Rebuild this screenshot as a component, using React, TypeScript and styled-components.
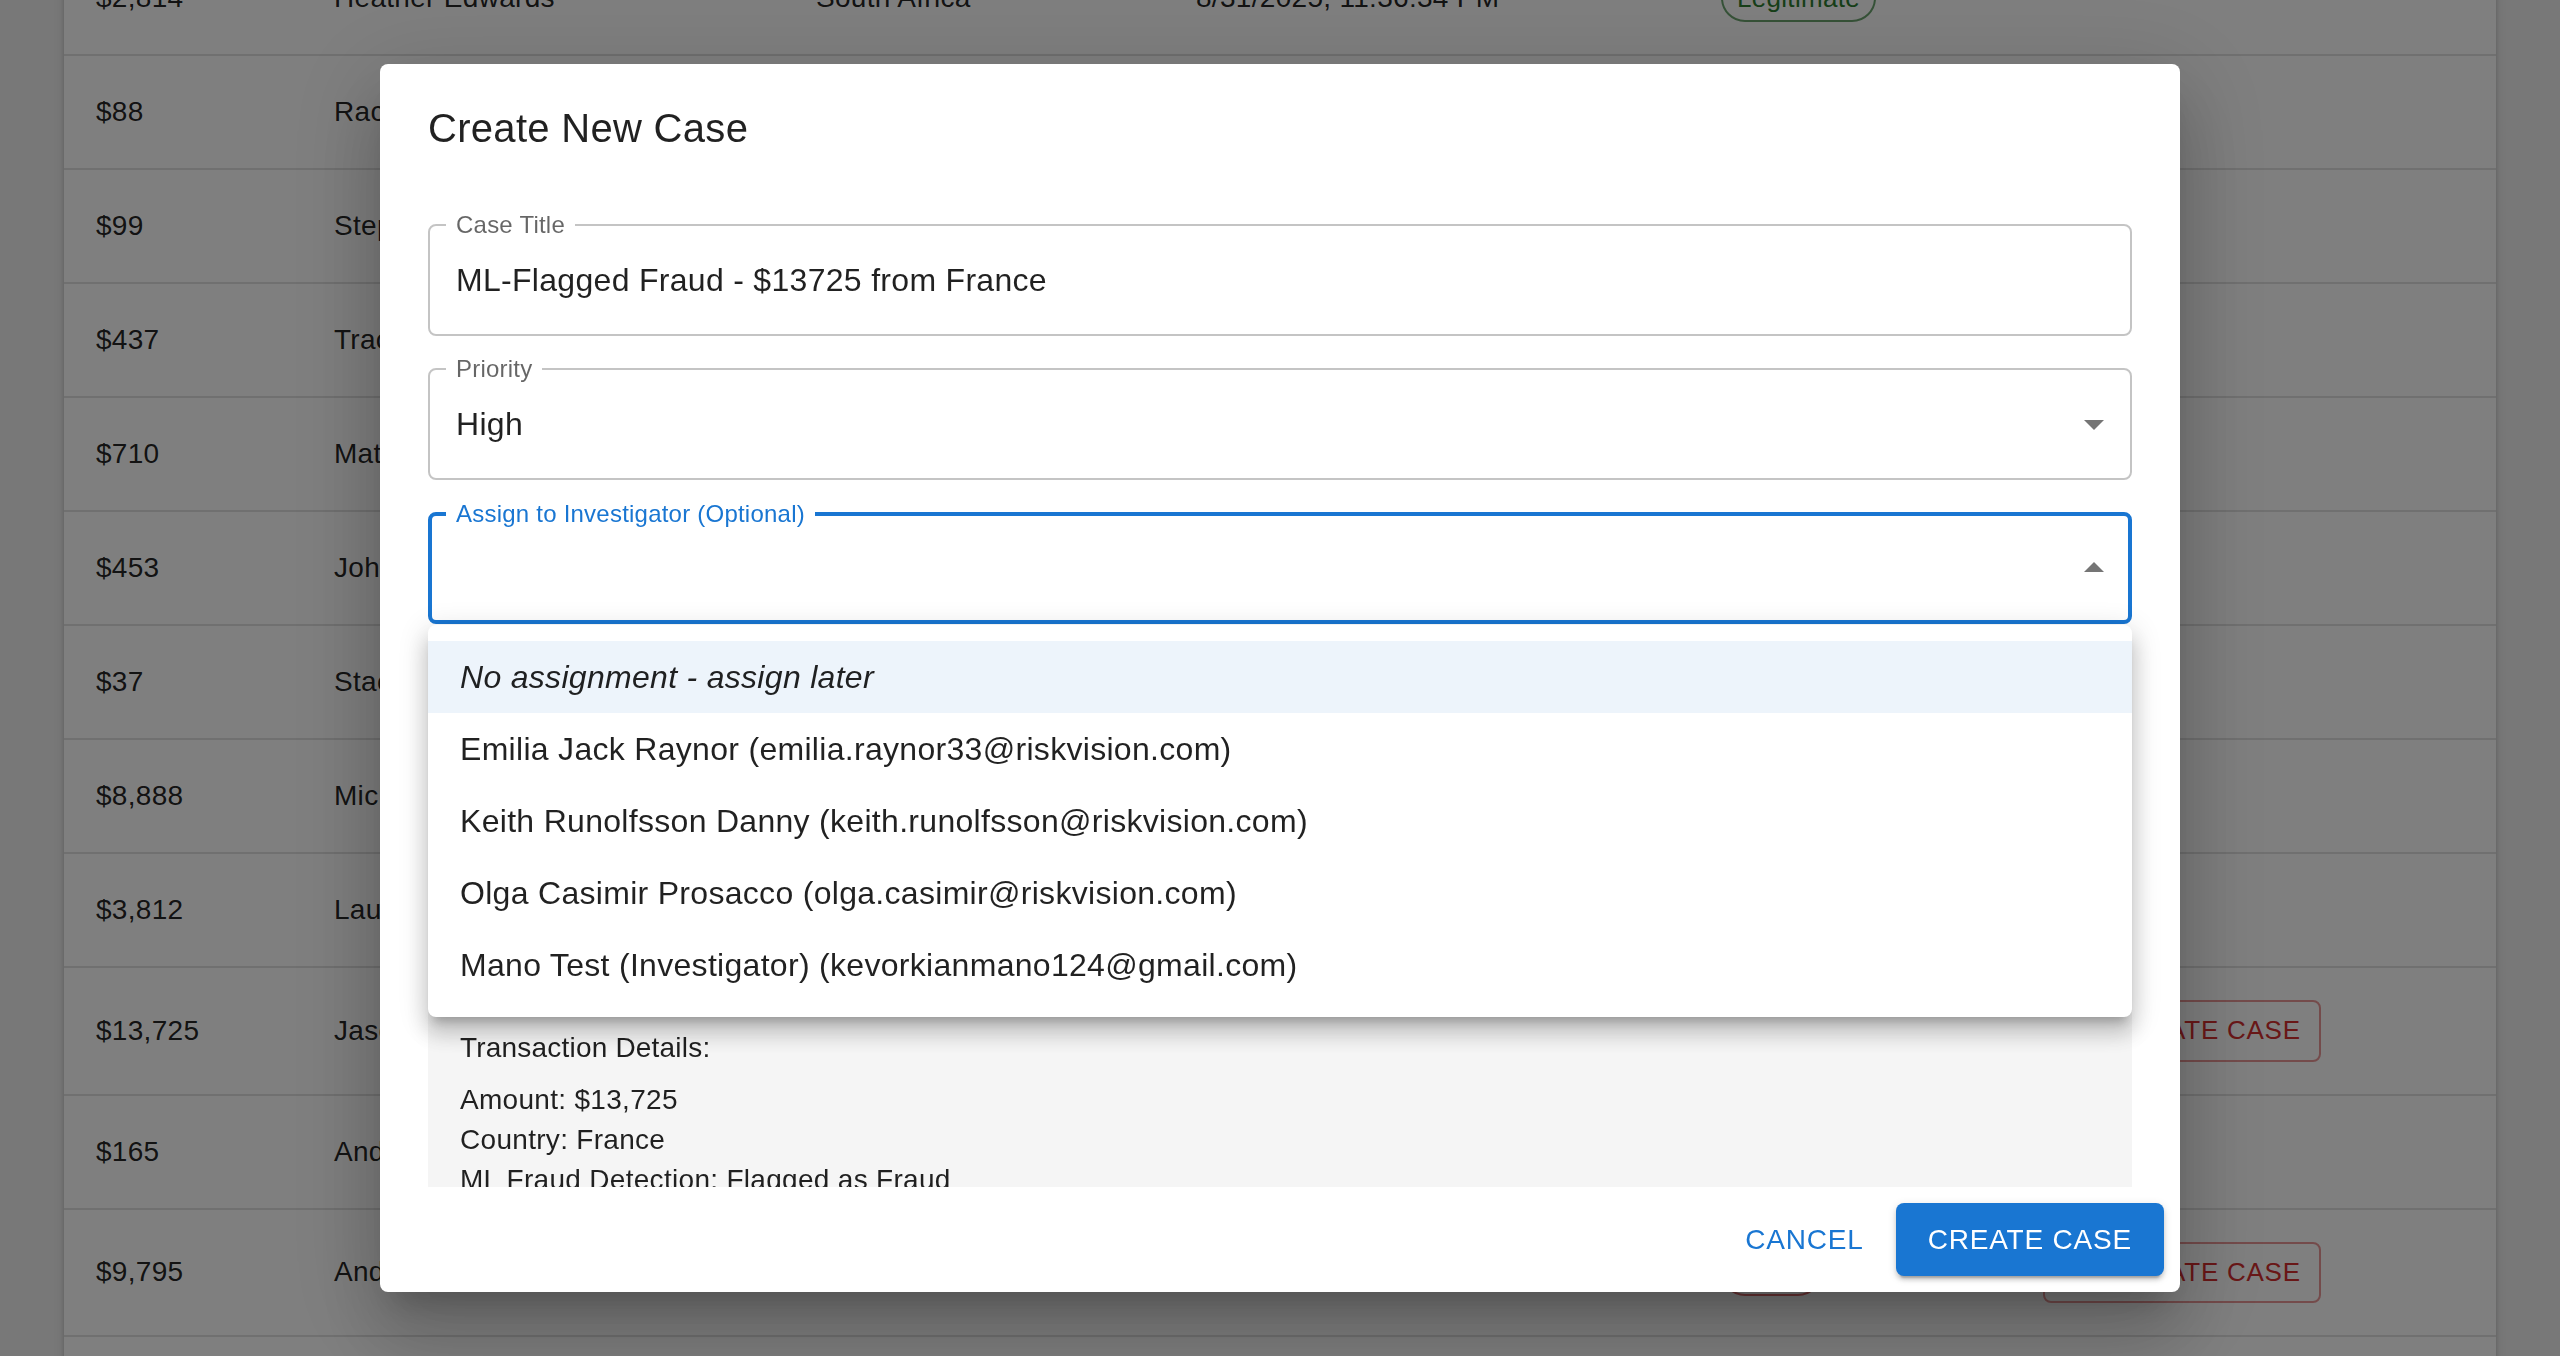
import React from "react";
import styled, { createGlobalStyle } from "styled-components";
import { FilePlus } from "lucide-react";

const GlobalStyle = createGlobalStyle`
  html, body { margin: 0; padding: 0; height: 100%; overflow: hidden; }
  body {
    background: #f0f0f0;
    font-family: "Liberation Sans", Arial, Helvetica, sans-serif;
    color: rgba(0, 0, 0, 0.87);
  }
  * { box-sizing: border-box; }
`;

/* ---------- background page (table) ---------- */

const Page = styled.div`
  height: 1356px;
  padding: 0 64px;
  overflow: hidden;
`;

const TablePaper = styled.div`
  margin-top: -58px;
  background: #fff;
  box-shadow: 0 4px 2px -2px rgba(0, 0, 0, 0.2), 0 2px 4px rgba(0, 0, 0, 0.14),
    0 2px 10px rgba(0, 0, 0, 0.12);
`;

const Row = styled.div`
  display: grid;
  grid-template-columns: 238px 482px 380px 525px 322px 1fr;
  border-bottom: 2px solid #e0e0e0;
`;

const Cell = styled.div`
  display: flex;
  align-items: center;
  padding: 32px;
  font-size: 28px;
  line-height: 40px;
  letter-spacing: 0.01071em;
  white-space: nowrap;
  overflow: hidden;
`;

const Chip = styled.span<{ $tone: "success" | "error" }>`
  display: inline-flex;
  align-items: center;
  height: 48px;
  padding: 0 14px;
  border-radius: 24px;
  border: 2px solid
    ${(p) => (p.$tone === "success" ? "rgba(46,125,50,0.7)" : "rgba(211,47,47,0.7)")};
  color: ${(p) => (p.$tone === "success" ? "#2e7d32" : "#d32f2f")};
  font-size: 26px;
  line-height: 1.5;
`;

const RowButton = styled.button`
  display: inline-flex;
  align-items: center;
  padding: 6px 18px;
  border: 2px solid rgba(211, 47, 47, 0.5);
  border-radius: 8px;
  background: transparent;
  color: #d32f2f;
  font-family: inherit;
  font-size: 26px;
  font-weight: 500;
  line-height: 1.75;
  letter-spacing: 0.02857em;
  text-transform: uppercase;
  white-space: nowrap;

  svg {
    width: 36px;
    height: 36px;
    margin-left: -4px;
    margin-right: 16px;
  }
`;

type Tx = {
  amount: string;
  name: string;
  country: string;
  date: string;
  fraud: boolean;
};

const rows: Tx[] = [
  { amount: "$2,814", name: "Heather Edwards", country: "South Africa", date: "8/31/2025, 11:36:34 PM", fraud: false },
  { amount: "$88", name: "Rachel Moore", country: "Canada", date: "8/31/2025, 11:21:08 PM", fraud: false },
  { amount: "$99", name: "Stephen Clark", country: "Germany", date: "8/31/2025, 11:02:47 PM", fraud: false },
  { amount: "$437", name: "Tracy Nguyen", country: "Australia", date: "8/31/2025, 10:48:19 PM", fraud: false },
  { amount: "$710", name: "Matthew Hall", country: "United States", date: "8/31/2025, 10:31:55 PM", fraud: false },
  { amount: "$453", name: "John Carter", country: "Brazil", date: "8/31/2025, 10:14:02 PM", fraud: false },
  { amount: "$37", name: "Stacy Lewis", country: "Japan", date: "8/31/2025, 9:57:40 PM", fraud: false },
  { amount: "$8,888", name: "Michael Scott", country: "India", date: "8/31/2025, 9:40:11 PM", fraud: false },
  { amount: "$3,812", name: "Laura Bennett", country: "Spain", date: "8/31/2025, 9:22:36 PM", fraud: false },
  { amount: "$13,725", name: "Jason Miller", country: "France", date: "8/31/2025, 9:05:59 PM", fraud: true },
  { amount: "$165", name: "Andrew Kim", country: "Mexico", date: "8/31/2025, 8:49:23 PM", fraud: false },
  { amount: "$9,795", name: "Andrea Lopez", country: "Nigeria", date: "8/31/2025, 8:31:14 PM", fraud: true },
  { amount: "$1,204", name: "Olivia Turner", country: "Italy", date: "8/31/2025, 8:12:50 PM", fraud: false },
];

/* ---------- dialog ---------- */

const Backdrop = styled.div`
  position: fixed;
  inset: 0;
  background: rgba(0, 0, 0, 0.5);
  display: flex;
  align-items: center;
  justify-content: center;
`;

const DialogPaper = styled.div`
  width: 1800px;
  height: calc(100% - 128px);
  background: #fff;
  border-radius: 8px;
  display: flex;
  flex-direction: column;
  box-shadow: 0px 22px 30px -14px rgba(0, 0, 0, 0.2), 0px 48px 76px 6px rgba(0, 0, 0, 0.14),
    0px 18px 92px 16px rgba(0, 0, 0, 0.12);
`;

const DialogTitle = styled.h2`
  flex-shrink: 0;
  margin: 0;
  padding: 32px 48px;
  font-size: 40px;
  font-weight: 500;
  line-height: 1.6;
  letter-spacing: 0.0075em;
`;

const DialogContent = styled.div`
  flex: 1 1 auto;
  overflow: hidden;
  padding: 32px 48px 40px;
  display: flex;
  flex-direction: column;
  gap: 32px;

  & > * {
    flex-shrink: 0;
  }
`;

const FieldWrap = styled.div`
  position: relative;
`;

const Field = styled.fieldset<{ $focused?: boolean }>`
  display: block;
  margin: 0;
  min-width: 0;
  width: 100%;
  padding: 0 ${(p) => (p.$focused ? 24 : 26)}px;
  border: ${(p) => (p.$focused ? "4px solid #1976d2" : "2px solid rgba(0,0,0,0.23)")};
  border-radius: 8px;
`;

const Legend = styled.legend<{ $focused?: boolean }>`
  height: 0;
  margin-left: -10px;
  padding: 0 10px;
  font-size: 24px;
  line-height: 0;
  letter-spacing: 0.00938em;
  color: ${(p) => (p.$focused ? "#1976d2" : "rgba(0,0,0,0.6)")};
  white-space: nowrap;
`;

/* inner height = outline height minus the two borders */
const FieldBody = styled.div<{ $focused?: boolean; $rows?: number }>`
  height: ${(p) => (p.$rows ? 308 : 112) - (p.$focused ? 8 : 4)}px;
  display: flex;
  align-items: center;
  justify-content: space-between;
`;

const ValueText = styled.span`
  font-size: 32px;
  line-height: 1.4375;
  letter-spacing: 0.00938em;
  color: rgba(0, 0, 0, 0.87);
  white-space: nowrap;
`;

const ArrowIcon = styled.svg<{ $open?: boolean }>`
  width: 48px;
  height: 48px;
  flex-shrink: 0;
  margin-right: -14px;
  fill: rgba(0, 0, 0, 0.54);
  transform: ${(p) => (p.$open ? "rotate(180deg)" : "none")};
`;

const MenuPaper = styled.ul`
  position: absolute;
  top: calc(100% + 1px);
  left: 0;
  right: 0;
  z-index: 5;
  margin: 0;
  padding: 16px 0;
  list-style: none;
  background: #fff;
  border-radius: 8px;
  box-shadow: 0px 10px 10px -6px rgba(0, 0, 0, 0.2), 0px 16px 20px 2px rgba(0, 0, 0, 0.14),
    0px 6px 28px 4px rgba(0, 0, 0, 0.12);
`;

const MenuItem = styled.li<{ $selected?: boolean; $italic?: boolean }>`
  height: 72px;
  padding: 0 32px;
  display: flex;
  align-items: center;
  font-size: 32px;
  line-height: 1.5;
  letter-spacing: 0.00938em;
  color: rgba(0, 0, 0, 0.87);
  white-space: nowrap;
  font-style: ${(p) => (p.$italic ? "italic" : "normal")};
  background: ${(p) => (p.$selected ? "rgba(25,118,210,0.08)" : "transparent")};
`;

const DetailsBox = styled.div`
  background: #f5f5f5;
  border-radius: 8px;
  padding: 32px;
`;

const DetailsTitle = styled.p`
  margin: 0 0 12px;
  font-size: 28px;
  line-height: 40px;
  letter-spacing: 0.00714em;
`;

const DetailLine = styled.p`
  margin: 0;
  font-size: 28px;
  line-height: 40px;
  letter-spacing: 0.01071em;
`;

const DialogActions = styled.div`
  flex-shrink: 0;
  display: flex;
  justify-content: flex-end;
  align-items: center;
  gap: 16px;
  padding: 16px;
`;

const BaseButton = styled.button`
  border: 0;
  border-radius: 8px;
  font-family: inherit;
  font-size: 28px;
  font-weight: 500;
  line-height: 1.75;
  letter-spacing: 0.02857em;
  text-transform: uppercase;
  white-space: nowrap;
  cursor: pointer;
`;

const TextButton = styled(BaseButton)`
  padding: 12px 16px;
  background: transparent;
  color: #1976d2;
`;

const ContainedButton = styled(BaseButton)`
  padding: 12px 32px;
  background: #1976d2;
  color: #fff;
  box-shadow: 0px 6px 2px -4px rgba(0, 0, 0, 0.2), 0px 4px 4px 0px rgba(0, 0, 0, 0.14),
    0px 2px 10px 0px rgba(0, 0, 0, 0.12);
`;

const investigators = [
  "Emilia Jack Raynor (emilia.raynor33@riskvision.com)",
  "Keith Runolfsson Danny (keith.runolfsson@riskvision.com)",
  "Olga Casimir Prosacco (olga.casimir@riskvision.com)",
  "Mano Test (Investigator) (kevorkianmano124@gmail.com)",
];

const DropArrow = ({ open }: { open?: boolean }) => (
  <ArrowIcon $open={open} viewBox="0 0 24 24" aria-hidden="true">
    <path d="M7 10l5 5 5-5z" />
  </ArrowIcon>
);

export default function App() {
  return (
    <>
      <GlobalStyle />
      <Page>
        <TablePaper>
          {rows.map((r) => (
            <Row key={r.amount + r.name}>
              <Cell>{r.amount}</Cell>
              <Cell>{r.name}</Cell>
              <Cell>{r.country}</Cell>
              <Cell>{r.date}</Cell>
              <Cell>
                <Chip $tone={r.fraud ? "error" : "success"}>{r.fraud ? "Fraud" : "Legitimate"}</Chip>
              </Cell>
              <Cell>
                {r.fraud && (
                  <RowButton>
                    <FilePlus />
                    Create Case
                  </RowButton>
                )}
              </Cell>
            </Row>
          ))}
        </TablePaper>
      </Page>

      <Backdrop>
        <DialogPaper role="dialog">
          <DialogTitle>Create New Case</DialogTitle>
          <DialogContent>
            <Field>
              <Legend>Case Title</Legend>
              <FieldBody>
                <ValueText>ML-Flagged Fraud - $13725 from France</ValueText>
              </FieldBody>
            </Field>

            <Field>
              <Legend>Priority</Legend>
              <FieldBody>
                <ValueText>High</ValueText>
                <DropArrow />
              </FieldBody>
            </Field>

            <FieldWrap>
              <Field $focused>
                <Legend $focused>Assign to Investigator (Optional)</Legend>
                <FieldBody $focused>
                  <ValueText />
                  <DropArrow open />
                </FieldBody>
              </Field>
              <MenuPaper role="listbox">
                <MenuItem $selected $italic>
                  No assignment - assign later
                </MenuItem>
                {investigators.map((i) => (
                  <MenuItem key={i}>{i}</MenuItem>
                ))}
              </MenuPaper>
            </FieldWrap>

            <Field>
              <Legend>Description</Legend>
              <FieldBody $rows={4} />
            </Field>

            <DetailsBox>
              <DetailsTitle>Transaction Details:</DetailsTitle>
              <DetailLine>Amount: $13,725</DetailLine>
              <DetailLine>Country: France</DetailLine>
              <DetailLine>ML Fraud Detection: Flagged as Fraud</DetailLine>
              <DetailLine>Customer: Jason Miller</DetailLine>
            </DetailsBox>
          </DialogContent>
          <DialogActions>
            <TextButton>Cancel</TextButton>
            <ContainedButton>Create Case</ContainedButton>
          </DialogActions>
        </DialogPaper>
      </Backdrop>
    </>
  );
}
